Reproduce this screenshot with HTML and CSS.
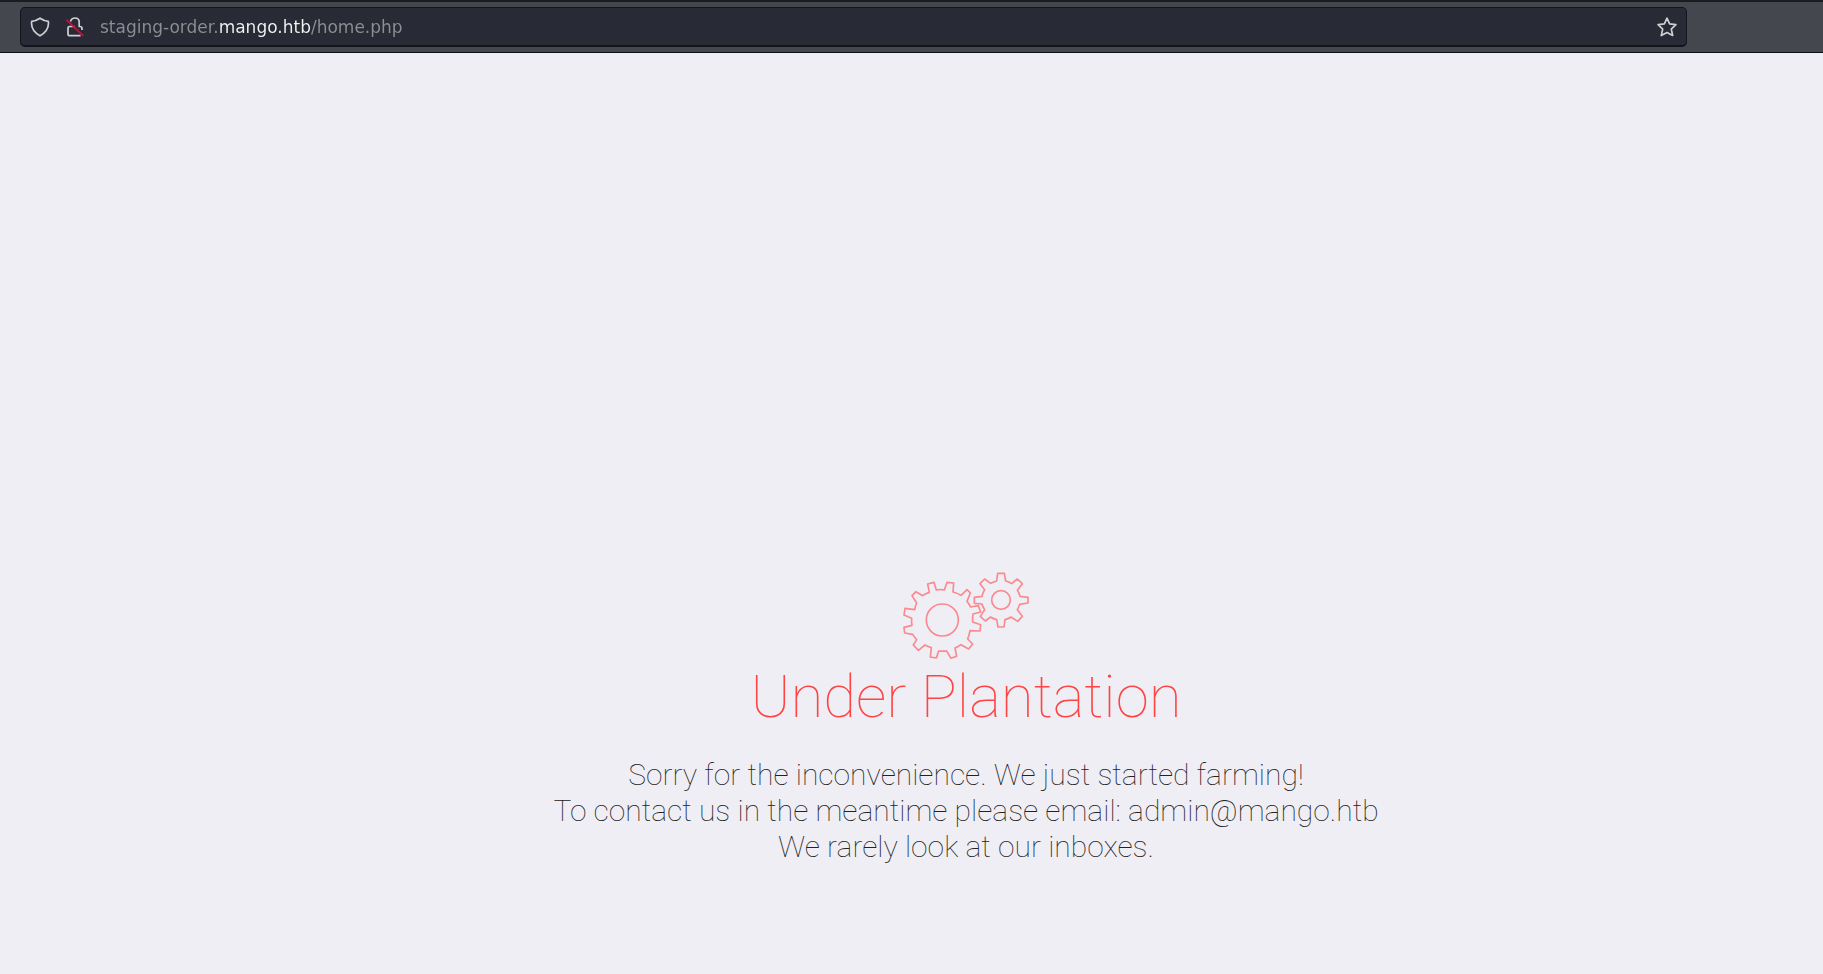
FILE: index.html
```html
<!DOCTYPE html>
<html lang="en">
<head>
<meta charset="utf-8">
<title>Under Plantation</title>
<link rel="stylesheet" href="styles.css">
</head>
<body>
<header class="toolbar">
  <div class="urlbar">
    <button class="icon-button" type="button" aria-label="Tracking protection">
      <svg class="icon" viewBox="0 0 20 20"><path d="M10 1.2 Q13.8 3.8 18.3 4.4 Q19.6 13.2 10 18.8 Q.4 13.2 1.7 4.4 Q6.2 3.8 10 1.2Z"/></svg>
    </button>
    <button class="icon-button" type="button" aria-label="Connection not secure">
      <svg class="icon" viewBox="0 0 20 20"><path d="M5.5 4.5 Q6.5 1 10 1 Q14.2 1 14.2 5.2 V9.5 H15 Q17 9.5 17 11.5 V13 M9.5 9.5 H4.5 Q3 9.5 3 11.5 V17 Q3 18.7 5 18.7 H15.5"/><path class="slash" d="M1.5 2.8 L18.3 18.8"/></svg>
    </button>
    <input class="address" type="text" aria-label="Address" value="staging-order.mango.htb/home.php" spellcheck="false">
    <button class="icon-button" type="button" aria-label="Bookmark this page">
      <svg class="icon" viewBox="0 0 20 20"><path d="M10 1.2 L12.6 6.9 L18.9 7.6 L14.3 12.1 L15.7 18.5 L10 15.5 L4.3 18.5 L5.7 12.1 L1.1 7.6 L7.4 6.9Z"/></svg>
    </button>
  </div>
</header>
<main class="page">
  <svg class="gears" viewBox="36 34 384 270" aria-hidden="true">
    <path d="M118 98 L113 73 L132 68 L139 91 Q151 88 163 91 L171 68 L191 70 L189 97 Q202 100 213 107 L231 90 L241 100 L231 125 Q237 133 242 142 L265 138 L272 157 L249 163 Q247 175 248 187 L272 195 L270 214 L240 213 Q238 226 233 238 L248 253 L236 268 L213 255 Q205 261 195 265 L200 290 L183 296 L170 274 Q158 275 146 274 L139 295 L121 292 L124 264 Q114 261 105 256 L85 272 L70 256 L80 240 Q73 232 68 224 L44 220 L42 203 L66 197 Q64 186 65 176 L42 166 L45 146 L74 150 Q75 140 80 130 L66 108 L78 96 L98 108 Q107 101 118 98Z"/>
    <circle cx="157" cy="181" r="48"/>
    <path d="M302 71 Q311 66 320 64 L323 41 L343 41 L347 64 Q357 66 365 72 L382 58 L397 72 L382 92 Q388 100 390 110 L414 113 L414 130 L389 134 Q387 142 382 150 L397 170 L383 185 L363 172 Q355 178 345 180 L342 202 L324 202 L320 180 Q310 178 302 172 L286 184 L271 170 L284 150 Q278 142 276 133 L253 131 L253 113 L276 110 Q278 100 284 90 L270 72 L284 58Z"/>
    <circle cx="333" cy="121" r="28"/>
  </svg>
  <h1 class="title">Under Plantation</h1>
  <p class="message">Sorry for the inconvenience. We just started farming!<br>To contact us in the meantime please email: admin@mango.htb<br>We rarely look at our inboxes.</p>
</main>
</body>
</html>
```
FILE: styles.css
```css
* {
  box-sizing: border-box;
}

body {
  margin: 0;
  min-height: 100vh;
  background: #efeef5;
  font-family: Roboto, sans-serif;
  font-weight: 100;
}

.toolbar {
  padding: 5px 136px 5px 20px;
  background: #45474e;
  border-top: 2px solid #1b1b20;
  border-bottom: 1px solid #0f1014;
}

.urlbar {
  display: flex;
  align-items: center;
  gap: 15px;
  height: 40px;
  padding: 0 9px;
  background: #282a36;
  border: 1px solid #14151b;
  border-bottom-width: 2px;
  border-radius: 5px;
}

.icon-button {
  display: flex;
  padding: 0;
  border: 0;
  background: none;
}

.icon {
  width: 20px;
  height: 20px;
  fill: none;
  stroke: #d0d0d2;
  stroke-width: 1.7;
  stroke-linejoin: round;
}

.icon .slash {
  stroke: #c8103e;
}

/* The registered domain is brighter than the rest of the address. */
.address {
  flex: 1;
  min-width: 0;
  height: 28px;
  padding: 0;
  border: 0;
  outline: 0;
  background: linear-gradient(90deg, #8e8f94 120px, #f4f4f4 120px, #f4f4f4 211px, #8e8f94 211px) text;
  color: transparent;
  font: 17px "DejaVu Sans", sans-serif;
}

.page {
  display: flex;
  flex-direction: column;
  align-items: center;
  padding: 518px 0 24px 109px;
  text-align: center;
}

.gears {
  width: 128px;
  height: 90px;
  fill: none;
  stroke: #fa8a8f;
  stroke-width: 5;
  stroke-linejoin: round;
}

.title {
  margin: 0;
  color: #ff4444;
  font-size: 60px;
  font-weight: 100;
  line-height: 72px;
}

.message {
  margin: 24px 0 0;
  color: #222;
  font-size: 30px;
  line-height: 36px;
}
```
